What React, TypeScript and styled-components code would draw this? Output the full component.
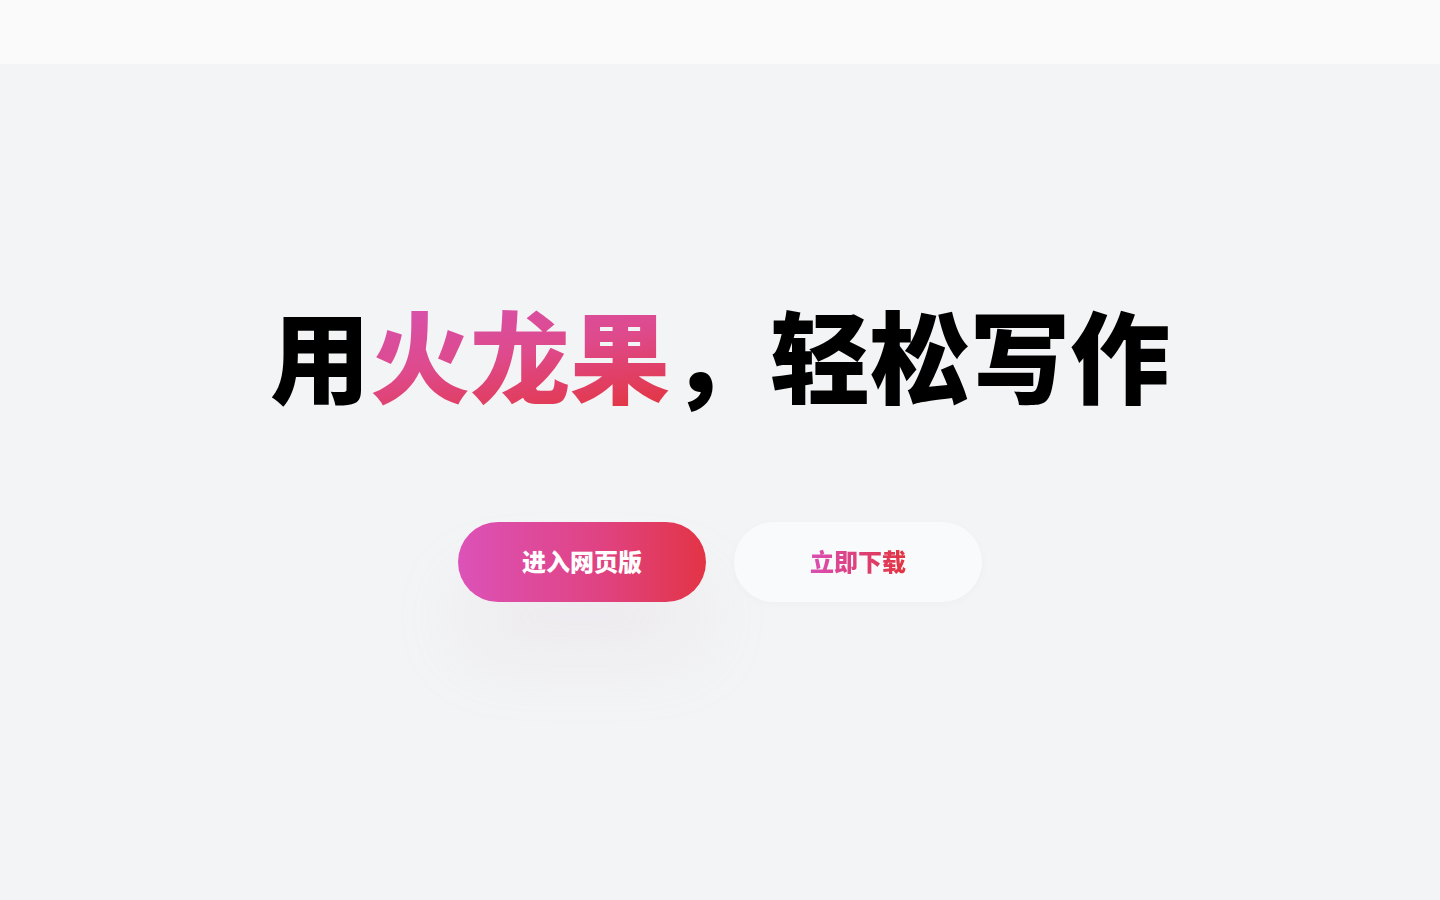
import styled, { createGlobalStyle } from 'styled-components';

const GlobalStyle = createGlobalStyle`
  html, body {
    margin: 0;
    padding: 0;
    background: #f3f4f6;
    font-family: "Noto Sans CJK SC", "Noto Sans", sans-serif;
  }
`;

const Page = styled.div`
  min-height: 900px;
  display: flex;
  flex-direction: column;
  background: #f3f4f6;
`;

const Header = styled.header`
  height: 64px;
  background: #fafafa;
`;

const Hero = styled.main`
  display: flex;
  flex-direction: column;
  align-items: center;
  padding-top: 229px;
`;

const Title = styled.h1`
  margin: 0;
  font-size: 100px;
  line-height: 120px;
  font-weight: 900;
  color: #000;
`;

const Highlight = styled.span`
  background: linear-gradient(170deg, #d454bb 0%, #de4a8c 50%, #e4302f 100%);
  -webkit-background-clip: text;
  background-clip: text;
  color: transparent;
`;

const Actions = styled.div`
  display: flex;
  gap: 28px;
  margin-top: 109px;
`;

const Button = styled.button<{ $primary?: boolean }>`
  width: 248px;
  height: 80px;
  padding: 0 0 4px;
  border: none;
  border-radius: 40px;
  font-family: inherit;
  font-size: 24px;
  font-weight: 900;
  cursor: pointer;
  display: flex;
  align-items: center;
  justify-content: center;
  background: ${(p) =>
    p.$primary ? 'linear-gradient(90deg, #dc52b8 0%, #e0427f 60%, #e33446 100%)' : '#f9fafb'};
  color: ${(p) => (p.$primary ? '#fff' : 'inherit')};
  box-shadow: ${(p) =>
    p.$primary
      ? '0 55px 70px -5px rgba(215, 195, 205, 0.22)'
      : '0 2px 10px rgba(0, 0, 0, 0.025)'};
`;

const GradientLabel = styled.span`
  background: linear-gradient(90deg, #d94fb5 0%, #e2333f 100%);
  -webkit-background-clip: text;
  background-clip: text;
  color: transparent;
`;

export default function App() {
  return (
    <>
      <GlobalStyle />
      <Page>
        <Header />
        <Hero>
          <Title>
            用<Highlight>火龙果</Highlight>，轻松写作
          </Title>
          <Actions>
            <Button $primary>进入网页版</Button>
            <Button>
              <GradientLabel>立即下载</GradientLabel>
            </Button>
          </Actions>
        </Hero>
      </Page>
    </>
  );
}
